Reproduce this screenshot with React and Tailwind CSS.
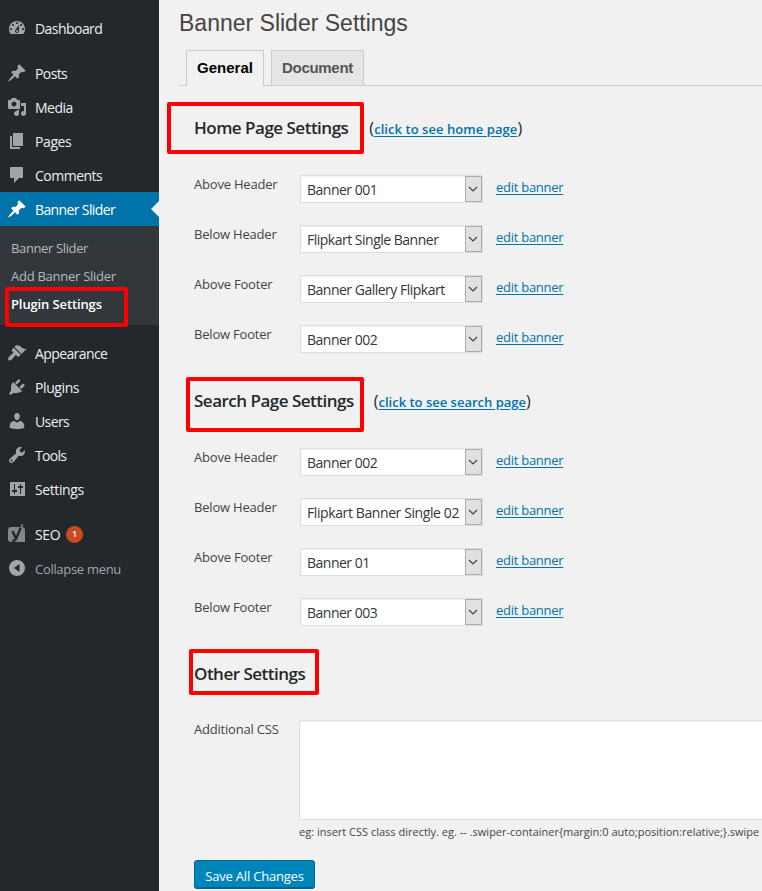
const ICONS = {
  dashboard: "M3.76 16h12.48c1.1-1.37 1.76-3.11 1.76-5 0-4.42-3.58-8-8-8s-8 3.58-8 8c0 1.89.66 3.63 1.76 5zM10 4c.55 0 1 .45 1 1s-.45 1-1 1-1-.45-1-1 .45-1 1-1zM6 6c.55 0 1 .45 1 1s-.45 1-1 1-1-.45-1-1 .45-1 1-1zm8 0c.55 0 1 .45 1 1s-.45 1-1 1-1-.45-1-1 .45-1 1-1zm-5.37 5.55L12 7v6c0 1.1-.9 2-2 2s-2-.9-2-2c0-.57.24-1.08.63-1.45zM4 10c.55 0 1 .45 1 1s-.45 1-1 1-1-.45-1-1 .45-1 1-1zm12 0c.55 0 1 .45 1 1s-.45 1-1 1-1-.45-1-1 .45-1 1-1zm-5 3c0-.55-.45-1-1-1s-1 .45-1 1 .45 1 1 1 1-.45 1-1z",
  pin: "M10.44 3.02l1.82-1.82 6.36 6.35-1.83 1.82c-1.05-.68-2.48-.57-3.41.36l-.75.75c-.92.93-1.04 2.35-.35 3.41l-1.83 1.82-2.41-2.41-2.8 2.79c-.42.42-3.38 2.71-3.8 2.29s1.86-3.39 2.28-3.81l2.79-2.79L4.1 9.36l1.83-1.82c1.05.69 2.48.57 3.4-.36l.75-.75c.93-.92 1.05-2.35.36-3.41z",
  media: "M13 11V4c0-.55-.45-1-1-1h-1.67L9 1H5L3.67 3H2c-.55 0-1 .45-1 1v7c0 .55.45 1 1 1h10c.55 0 1-.45 1-1zM7 4.5c1.38 0 2.5 1.12 2.5 2.5S8.38 9.5 7 9.5 4.5 8.38 4.5 7 5.62 4.5 7 4.5zM14 6h5v10.5c0 1.38-1.12 2.5-2.5 2.5S14 17.88 14 16.5s1.12-2.5 2.5-2.5c.17 0 .34.02.5.05V9h-3V6zm-4 8.05V13h2v3.5c0 1.38-1.12 2.5-2.5 2.5S7 17.88 7 16.5 8.12 14 9.5 14c.17 0 .34.02.5.05z",
  pages: "M6 15V2h10v13H6zm-1 1h8v2H3V5h2v11z",
  comments: "M4 2h11c.6 0 1 .4 1 1v9c0 .6-.4 1-1 1h-3l-5 5v-5H4c-.6 0-1-.4-1-1V3c0-.6.4-1 1-1z",
  appearance: "M14.48 11.06L7.41 3.99l1.5-1.5c.5-.56 2.3-.47 3.51.32 1.21.8 1.43 1.28 2.91 2.1 1.18.64 2.45 1.26 4.45.85zm-.71.71L6.7 4.7 4.93 6.47c-.39.39-.39 1.02 0 1.41l1.06 1.06c.39.39.39 1.03 0 1.42-.6.6-1.43 1.11-2.21 1.69-.35.26-.7.53-1.01.84C1.43 14.23.4 16.08 1.4 17.07c.99 1 2.84-.03 4.18-1.36.31-.31.58-.66.85-1.02.57-.78 1.08-1.61 1.69-2.21.39-.39 1.02-.39 1.41 0l1.06 1.06c.39.39 1.02.39 1.41 0z",
  plugins: "M13.11 4.36L9.87 7.6 8 5.73l3.24-3.24c.35-.34 1.05-.2 1.56.32.52.51.66 1.21.31 1.55zm-8 1.77l.91-1.12 9.01 9.01-1.19.84c-.71.71-2.63 1.16-3.82 1.16H6.14L4.9 17.26c-.59.59-1.54.59-2.12 0-.59-.58-.59-1.53 0-2.12l1.24-1.24v-3.88c0-1.13.4-3.19 1.09-3.89zm7.26 3.97l3.24-3.24c.34-.35 1.04-.21 1.55.31.52.51.66 1.21.31 1.55l-3.24 3.25z",
  users: "M10 9.25c-2.27 0-2.73-3.44-2.73-3.44C7 4.02 7.82 2 9.97 2c2.16 0 2.98 2.02 2.71 3.81 0 0-.41 3.44-2.68 3.44zm0 2.57L12.72 10c2.39 0 4.52 2.33 4.52 4.53v2.49s-3.65 1.13-7.24 1.13c-3.65 0-7.24-1.13-7.24-1.13v-2.49c0-2.25 1.94-4.48 4.47-4.48z",
  tools: "M16.68 9.77c-1.34 1.34-3.3 1.67-4.95.99l-5.41 6.52c-.99.99-2.59.99-3.58 0s-.99-2.59 0-3.57l6.52-5.42c-.68-1.65-.35-3.61.99-4.95 1.28-1.28 3.12-1.62 4.72-1.06l-2.89 2.89 2.82 2.82 2.86-2.87c.53 1.58.18 3.39-1.08 4.65zM3.81 16.21c.4.39 1.04.39 1.43 0 .4-.4.4-1.04 0-1.43-.39-.4-1.03-.4-1.43 0-.39.39-.39 1.03 0 1.43z",
  settings: "M3 3h15v14H3zM7 5v6H5v2h2v2h1v-2h2v-2H8V5zM13 5v2h-2v2h2v6h1V9h2V7h-2V5z",
  collapse: "M10 2a8 8 0 1 0 0 16a8 8 0 1 0 0-16zM12.5 6v8L7 10z",
};

function Icon({ name }) {
  return (
    <svg viewBox="0 0 20 20" className="h-5 w-5 shrink-0" fill="currentColor" fillRule="evenodd">
      <path d={ICONS[name]} />
    </svg>
  );
}

function SeoIcon() {
  return (
    <svg viewBox="0 0 20 20" className="h-5 w-5 shrink-0">
      <path d="M4 3h12l2 2v13H4a3 3 0 0 1-3-3V6a3 3 0 0 1 3-3z" fill="#82878c" />
      <path d="M5.5 7l3.4 7.6M14.6 1.5L9.3 14.4Q8.2 17 5.2 17" fill="none" stroke="#23282d" strokeWidth="2.4" />
      <path d="M15.4 0.3L14 3.8" fill="none" stroke="#82878c" strokeWidth="1.6" />
    </svg>
  );
}

function MenuItem({ icon, label, tracking = "tracking-[-0.4px]" }) {
  return (
    <a className="flex h-[34px] items-center pl-[7px] text-[#eee]">
      <span className="text-[#a0a5aa]"><Icon name={icon} /></span>
      <span className={`ml-2 pt-[2px] ${tracking}`}>{label}</span>
    </a>
  );
}

function Sidebar() {
  return (
    <aside className="w-[159px] shrink-0 bg-[#23282d] pt-[11px] text-[14px] leading-[18px]">
      <MenuItem icon="dashboard" label="Dashboard" tracking="tracking-[-0.55px]" />
      <div className="h-[11px]" />
      <MenuItem icon="pin" label="Posts" tracking="tracking-[-0.6px]" />
      <MenuItem icon="media" label="Media" tracking="tracking-[-0.5px]" />
      <MenuItem icon="pages" label="Pages" />
      <MenuItem icon="comments" label="Comments" tracking="tracking-[-0.5px]" />
      <div className="relative flex h-[34px] items-center bg-[#0073aa] pl-[7px] text-white">
        <Icon name="pin" />
        <span className="ml-2 pt-[2px] tracking-[-0.62px]">Banner Slider</span>
        <span className="absolute top-[9px] right-0 border-y-8 border-r-8 border-y-transparent border-r-[#f1f1f1]" />
      </div>
      <div className="relative flex h-[99px] flex-col bg-[#32373c] pt-[8px] pl-[11px] text-[13px] leading-7 text-[#b4b9be]">
        <span className="tracking-[-0.37px]">Banner Slider</span>
        <span className="tracking-[-0.26px]">Add Banner Slider</span>
        <span className="font-semibold tracking-[-0.12px] text-white">Plugin Settings</span>
        <span className="absolute top-[61px] left-[5px] h-[40px] w-[123px] rounded-[2px] border-4 border-[#f00]" />
      </div>
      <div className="h-[11px]" />
      <MenuItem icon="appearance" label="Appearance" tracking="tracking-[-0.6px]" />
      <MenuItem icon="plugins" label="Plugins" />
      <MenuItem icon="users" label="Users" tracking="tracking-[-0.6px]" />
      <MenuItem icon="tools" label="Tools" tracking="tracking-[-0.7px]" />
      <MenuItem icon="settings" label="Settings" />
      <div className="h-[11px]" />
      <div className="flex h-[34px] items-center pl-[7px] text-[#eee]">
        <SeoIcon />
        <span className="ml-2 pt-[2px] tracking-[-0.4px]">SEO</span>
        <span className="ml-[6px] flex h-[17px] w-[17px] items-center justify-center rounded-full bg-[#ca4a1f] text-[9px] font-semibold text-white">1</span>
      </div>
      <div className="flex h-[34px] items-center pl-[7px] text-[13px] text-[#a0a5aa]">
        <Icon name="collapse" />
        <span className="ml-2 pt-[2px] tracking-[-0.3px]">Collapse menu</span>
      </div>
    </aside>
  );
}

function BannerRow({ label, value, tracking = "tracking-[-0.5px]" }) {
  return (
    <div className="flex h-[50px] items-start text-[13px] leading-5">
      <span className="-mt-px w-[106px] tracking-[-0.2px] text-[#444]">{label}</span>
      <div className="flex h-[28px] w-[183px] items-stretch justify-between border border-[#ddd] bg-white shadow-[inset_0_1px_2px_rgba(0,0,0,0.07)]">
        <span className={`w-[163px] pt-[4px] pl-[6px] text-[14px] whitespace-nowrap text-[#32373c] ${tracking}`}>{value}</span>
        <span className="flex w-[17px] shrink-0 items-center justify-center border border-[#acacac] bg-[#e1e1e1] pr-px">
          <svg viewBox="0 0 10 6" className="h-[6px] w-[10px] shrink-0" fill="none" stroke="#444" strokeWidth="1.2">
            <path d="M1 1l4 4 4-4" />
          </svg>
        </span>
      </div>
      <a className="ml-[13px] pt-[2px] tracking-[-0.27px] text-[#0073aa] underline underline-offset-2">edit banner</a>
    </div>
  );
}

function SectionTitle({ title, link, box, linkClass }) {
  return (
    <div className="relative flex items-center text-[#23282d]">
      <span className={`absolute rounded-[2px] border-4 border-[#f00] ${box}`} />
      <h3 className="text-[17px] leading-6 font-semibold tracking-[-0.5px]">{title}</h3>
      {link && (
        <span className={`text-[13px] leading-5 font-semibold whitespace-nowrap ${linkClass}`}>
          <span className="text-[16px] font-normal">(</span>
          <a className="text-[#0073aa] underline underline-offset-2">{link}</a>
          <span className="text-[16px] font-normal">)</span>
        </span>
      )}
    </div>
  );
}

const HOME = [
  ["Above Header", "Banner 001"],
  ["Below Header", "Flipkart Single Banner"],
  ["Above Footer", "Banner Gallery Flipkart"],
  ["Below Footer", "Banner 002"],
];

const SEARCH = [
  ["Above Header", "Banner 002"],
  ["Below Header", "Flipkart Banner Single 02", "tracking-[-0.4px]"],
  ["Above Footer", "Banner 01"],
  ["Below Footer", "Banner 003"],
];

export default function App() {
  return (
    <div className="flex h-[891px] w-[762px] overflow-hidden bg-[#f1f1f1] font-['Open_Sans','Noto_Sans',sans-serif]">
      <Sidebar />
      <main className="min-w-0 flex-1 overflow-hidden pl-[20px]">
        <h1 className="h-[50px] pt-[9px] font-['Liberation_Sans',Arial,sans-serif] text-[23px] leading-[29px] text-[#444]">Banner Slider Settings</h1>
        <nav className="flex h-[36px] border-b border-[#ccc] pl-[7px] font-['Liberation_Sans',Arial,sans-serif] leading-6 font-bold">
          <a className="h-[36px] w-[78px] border border-b-0 border-[#ccc] bg-[#f1f1f1] pt-[5px] text-center text-[15px] text-black">General</a>
          <a className="ml-[7px] h-[35px] w-[93px] border border-b-0 border-[#ccc] bg-[#e5e5e5] pt-[5px] text-center text-[15px] tracking-[-0.3px] text-[#555]">Document</a>
        </nav>
        <div className="pl-[15px]">
          <div className="h-[89px] pt-[30px]">
            <SectionTitle title="Home Page Settings" link="click to see home page" linkClass="ml-[21px] tracking-[0.06px]" box="-top-[14px] -left-[27px] h-[52px] w-[197px]" />
          </div>
          {HOME.map(([label, value, tracking]) => <BannerRow key={label} label={label} value={value} tracking={tracking} />)}
          <div className="h-[73px] pt-[14px]">
            <SectionTitle title="Search Page Settings" link="click to see search page" linkClass="ml-[20px]" box="-top-[12px] -left-[8px] h-[55px] w-[178px]" />
          </div>
          {SEARCH.map(([label, value, tracking]) => <BannerRow key={label} label={label} value={value} tracking={tracking} />)}
          <div className="h-[72px] pt-[14px]">
            <SectionTitle title="Other Settings" box="-top-[13px] -left-[5px] h-[46px] w-[130px]" />
          </div>
          <div className="flex h-[140px] text-[13px] leading-5 text-[#444]">
            <span className="-mt-px w-[105px] shrink-0 tracking-[-0.2px]">Additional CSS</span>
            <div className="shrink-0">
              <div className="h-[100px] w-[600px] border border-[#ddd] bg-white shadow-[inset_0_1px_2px_rgba(0,0,0,0.07)]" />
              <p className="pt-[2px] text-[11px] whitespace-nowrap">{"eg: insert CSS class directly. eg. -- .swiper-container{margin:0 auto;position:relative;}.swipe"}</p>
            </div>
          </div>
          <button className="h-[28px] w-[121px] rounded-[3px] border border-[#006799] bg-[#0085ba] pt-[3px] text-[13px] leading-5 tracking-[-0.2px] text-white shadow-[0_1px_0_#006799]">Save All Changes</button>
        </div>
      </main>
    </div>
  );
}
